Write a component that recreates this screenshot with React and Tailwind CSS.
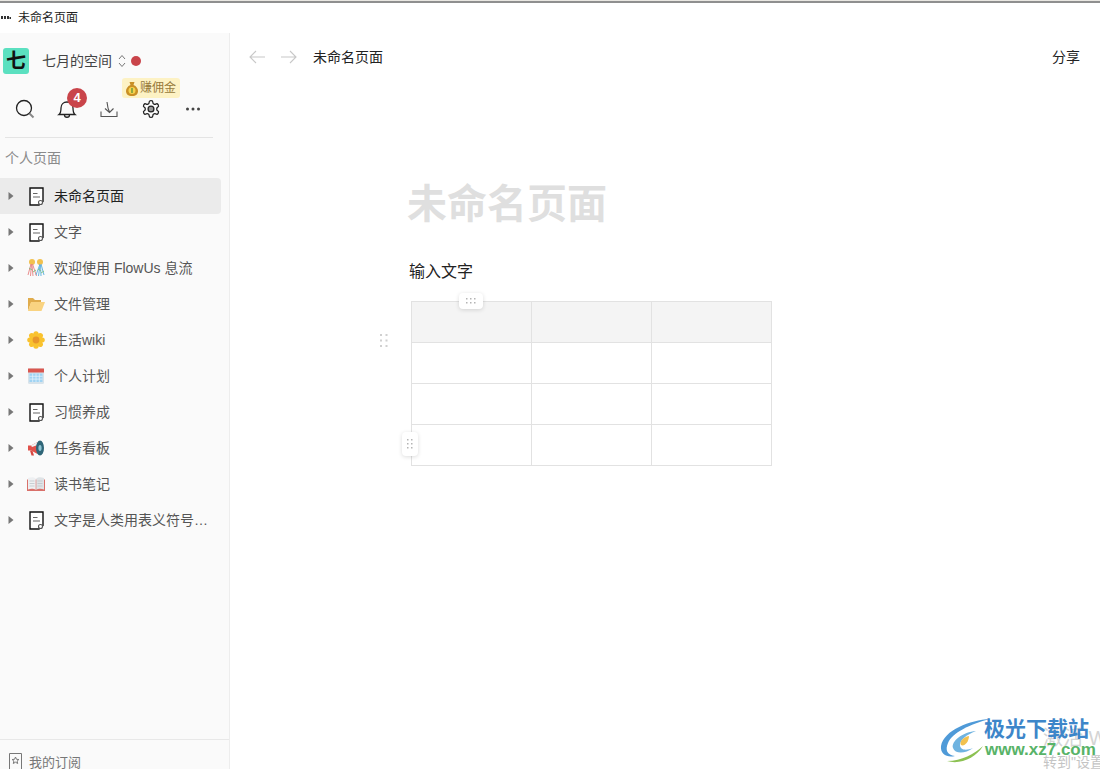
import React from 'react';

const FONT = '"Liberation Sans", "Noto Sans CJK SC", sans-serif';

const PageIcon = () => (
  <svg width="15" height="19" viewBox="0 0 15 19" fill="none">
    <path d="M1 1h13v13.500L10 18H1z" fill="#fff" stroke="#111" strokeWidth="1.400" />
    <path d="M4 6.500h4.500M4 10h7" stroke="#666" strokeWidth="1.100" />
    <circle cx="11.500" cy="15.500" r="2" fill="#fff" stroke="#555" strokeWidth="1.100" />
  </svg>
);

const Party = () => (
  <svg width="18" height="18" viewBox="0 0 18 18" fill="none">
    <circle cx="5" cy="3" r="3" fill="#f2c14e" />
    <circle cx="13" cy="3" r="3" fill="#f2c14e" />
    <path d="M4 5L1 16M4.500 5L3.500 17M5 6l1 11M5.500 5l4 12" stroke="#e58080" strokeWidth=".9" />
    <path d="M13 5l-4 11M13 6l-1.500 11M13.500 6l.5 11M14 5l3 11" stroke="#58aede" strokeWidth=".9" />
    <path d="M2 9l3 2M6 13l3-2M11 10l3 2M14 14l3-2" stroke="#7ac07a" strokeWidth=".9" />
  </svg>
);

const Folder = () => (
  <svg width="18" height="16" viewBox="0 0 18 16" fill="none">
    <path d="M1 2h5l2 2h6v3H4l-3 8z" fill="#e0ac4c" />
    <path d="M4 6h14l-3.500 9H1z" fill="#f9d381" />
  </svg>
);

const Flower = () => (
  <svg width="18" height="18" viewBox="0 0 18 18">
    {[0, 45, 90, 135, 180, 225, 270, 315].map((a) => (
      <ellipse key={a} cx="9" cy="3.800" rx="2.800" ry="3.600" fill="#f9c22e" transform={`rotate(${a} 9 9)`} />
    ))}
    <circle cx="9" cy="9" r="3.400" fill="#e8962a" />
  </svg>
);

const Calendar = () => (
  <svg width="18" height="18" viewBox="0 0 18 18">
    <rect x="1" y="1.500" width="16" height="15.500" rx="1.500" fill="#d8e3ea" />
    <rect x="1" y="1.500" width="16" height="4" fill="#d9574f" />
    <rect x="2.500" y="6.500" width="13" height="8.500" fill="#9fd3f3" />
    <path d="M2.500 9.300h13M2.500 12.100h13M5.700 6.500V15M9 6.500V15M12.300 6.500V15" stroke="#e9f5fc" strokeWidth=".7" />
  </svg>
);

const Megaphone = () => (
  <svg width="18" height="18" viewBox="0 0 18 18">
    <path d="M1 6.500h3L10.500 3v12L4 11.500H1z" fill="#e0514a" />
    <path d="M4 6.500L10.500 3v3L5 8z" fill="#f3f3f3" />
    <path d="M3 11.500l1.500 5H7l-1.500-4.500z" fill="#d9453f" />
    <ellipse cx="13" cy="9" rx="4" ry="7.500" fill="#2f6577" />
    <ellipse cx="13" cy="9" rx="1.600" ry="3" fill="#8fc5d4" />
  </svg>
);

const Book = () => (
  <svg width="18" height="14" viewBox="0 0 18 14">
    <path d="M0 2.500h18V14H0z" fill="#d9706a" />
    <path d="M1 1c3-1 6-1 7.700.6V13C7 11.600 4 11.600 1 12.400z" fill="#eef0f2" />
    <path d="M17 1c-3-1-6-1-7.700.6V13c1.700-1.400 4.700-1.400 7.700-.6z" fill="#dfe3e6" />
    <path d="M2.500 4h5M2.500 6.500h5M2.500 9h5M10.500 4h5M10.500 6.500h5M10.500 9h5" stroke="#b9c0c5" strokeWidth=".7" />
  </svg>
);

const pages = [
  { name: '未命名页面', icon: <PageIcon />, active: true },
  { name: '文字', icon: <PageIcon /> },
  { name: '欢迎使用 FlowUs 息流', icon: <Party /> },
  { name: '文件管理', icon: <Folder /> },
  { name: '生活wiki', icon: <Flower /> },
  { name: '个人计划', icon: <Calendar /> },
  { name: '习惯养成', icon: <PageIcon /> },
  { name: '任务看板', icon: <Megaphone /> },
  { name: '读书笔记', icon: <Book /> },
  { name: '文字是人类用表义符号记录', icon: <PageIcon /> },
];

const Dots = ({ cols, rows, color = '#c4c4c4', step = 4, size = 1.5 }) => {
  const w = (cols - 1) * step + size;
  const h = (rows - 1) * step + size;
  return (
    <svg width={w} height={h} viewBox={`0 0 ${w} ${h}`}>
      {Array.from({ length: cols * rows }).map((_, i) => (
        <rect key={i} x={(i % cols) * step} y={Math.floor(i / cols) * step} width={size} height={size} fill={color} />
      ))}
    </svg>
  );
};

const Sidebar = () => (
  <aside className="w-[230px] shrink-0 h-full bg-[#fafafa] border-r border-[#ededed] flex flex-col overflow-hidden">
    <div className="h-[56px] pt-[15px] pl-[3px] flex items-start">
      <div className="w-[26px] h-[26px] rounded-[3px] bg-[#5be0c0] flex items-center justify-center text-[20px] font-bold text-[#111]">七</div>
      <span className="ml-[13px] mt-[4px] text-[14px] leading-[18px] text-[#444]">七月的空间</span>
      <svg className="ml-[5px] mt-[6px]" width="10" height="14" viewBox="0 0 10 14" fill="none" stroke="#777" strokeWidth="1">
        <path d="M2 5l3-3.500L8 5M2 9l3 3.500L8 9" />
      </svg>
      <span className="ml-[4px] mt-[8px] w-[10px] h-[10px] rounded-full bg-[#c9444a]" />
    </div>
    <div className="relative h-[48px] flex items-start pl-[15px]">
      <svg className="mt-[10px]" width="20" height="20" viewBox="0 0 20 20" fill="none">
        <circle cx="9" cy="9" r="7.500" stroke="#222" strokeWidth="1.300" />
        <path d="M14.500 14.500L18.500 18.500" stroke="#888" strokeWidth="2" />
      </svg>
      <div className="relative ml-[22px] mt-[10px]">
        <svg width="20" height="20" viewBox="0 0 20 20" fill="none" stroke="#222" strokeWidth="1.300">
          <path d="M2 15.500c2-1.500 2-3.500 2-6.500 0-3.500 2.500-6 6-6s6 2.500 6 6c0 3 0 5 2 6.500z" />
          <path d="M7.500 16c0 3 5 3 5 0" />
        </svg>
        <span className="absolute -top-[11px] left-[10px] w-[20px] h-[20px] rounded-full bg-[#c9444a] text-white text-[13px] font-bold flex items-center justify-center">4</span>
      </div>
      <svg className="ml-[23px] mt-[11px]" width="18" height="18" viewBox="0 0 18 18" fill="none" stroke="#555" strokeWidth="1.100">
        <path d="M1 11.500v5h16v-5" />
        <path d="M7 2c.5 5 1.500 8 2.500 10M5 8.500l4.500 4 4-4" />
      </svg>
      <svg className="ml-[23px] mt-[10px]" width="20" height="20" viewBox="0 0 24 24" fill="none" stroke="#222" strokeWidth="1.500">
        <path d="M12.220 2h-.44a2 2 0 0 0-2 2v.18a2 2 0 0 1-1 1.730l-.43.25a2 2 0 0 1-2 0l-.15-.08a2 2 0 0 0-2.730.73l-.22.380a2 2 0 0 0 .73 2.730l.15.100a2 2 0 0 1 1 1.720v.510a2 2 0 0 1-1 1.740l-.15.090a2 2 0 0 0-.73 2.730l.22.380a2 2 0 0 0 2.730.73l.15-.08a2 2 0 0 1 2 0l.43.250a2 2 0 0 1 1 1.730V20a2 2 0 0 0 2 2h.44a2 2 0 0 0 2-2v-.18a2 2 0 0 1 1-1.730l.43-.25a2 2 0 0 1 2 0l.15.080a2 2 0 0 0 2.730-.73l.22-.390a2 2 0 0 0-.73-2.730l-.15-.080a2 2 0 0 1-1-1.740v-.500a2 2 0 0 1 1-1.740l.15-.090a2 2 0 0 0 .73-2.730l-.22-.380a2 2 0 0 0-2.730-.73l-.15.080a2 2 0 0 1-2 0l-.43-.250a2 2 0 0 1-1-1.730V4a2 2 0 0 0-2-2z" />
        <circle cx="12" cy="12" r="3.500" fill="#999" stroke="#222" />
      </svg>
      <svg className="ml-[24px] mt-[18px]" width="16" height="4" viewBox="0 0 16 4" fill="#444">
        <circle cx="2.500" cy="2" r="1.500" />
        <circle cx="8" cy="2" r="1.500" />
        <circle cx="13.500" cy="2" r="1.500" />
      </svg>
      <div className="absolute left-[122px] -top-[11px] h-[20px] w-[58px] rounded-[3px] bg-[#fdf2c4] flex items-center pl-[4px]">
        <svg width="12" height="15" viewBox="0 0 12 15">
          <path d="M3.500 1h5L7.500 4c3 1 4.500 4 4.500 6 0 3-2 5-6 5s-6-2-6-5c0-2 1.500-5 4.500-6z" fill="#c98f24" />
          <circle cx="6" cy="9.500" r="3.500" fill="#f6d24c" />
          <path d="M6 7v5" stroke="#4d8b3a" strokeWidth="1.200" />
        </svg>
        <span className="ml-[2px] text-[12px] leading-none text-[#96793a] whitespace-nowrap">赚佣金</span>
      </div>
    </div>
    <div className="ml-[5px] w-[208px] border-t border-[#e4e4e4]" />
    <div className="pl-[5px] pt-[12px] h-[40px] text-[14px] leading-[17px] text-[#8a8a8a]">个人页面</div>
    <nav className="flex-1 pr-[8px]">
      {pages.map((p) => (
        <div
          key={p.name}
          className={`h-[36px] flex items-center rounded-r-[4px] pl-[8px] ${p.active ? 'bg-[#ebebeb]' : ''}`}
        >
          <svg width="6" height="8" viewBox="0 0 6 8" fill="#777" className="shrink-0">
            <path d="M0.500 0L5.500 4L0.500 8z" />
          </svg>
          <span className="w-[18px] ml-[13px] shrink-0 flex items-center justify-center">{p.icon}</span>
          <span className={`ml-[9px] w-[154px] truncate text-[14px] ${p.active ? 'text-[#222]' : 'text-[#555]'}`}>{p.name}</span>
        </div>
      ))}
    </nav>
    <div className="h-[30px] border-t border-[#e8e8e8] pl-[9px] pt-[13px] flex items-start">
      <svg width="13" height="17" viewBox="0 0 13 17" fill="none" stroke="#777" strokeWidth="1">
        <path d="M.5.500h12v16H.5z" />
        <path d="M6.500 4l1 2.300 2.400.2-1.800 1.600.6 2.400-2.200-1.300-2.200 1.300.6-2.400-1.800-1.600 2.400-.2z" />
      </svg>
      <span className="ml-[7px] mt-[2px] text-[13px] leading-[16px] text-[#777] whitespace-nowrap">我的订阅</span>
    </div>
  </aside>
);

const Watermark = () => (
  <div className="absolute right-0 bottom-0 w-[160px] h-[55px] overflow-hidden pointer-events-none">
    <span className="absolute left-[103px] top-[14px] text-[20px] leading-none text-[#d4d4d4] whitespace-nowrap">激活 W</span>
    <span className="absolute left-[103px] top-[41px] text-[14px] leading-none text-[#c4c4c4] whitespace-nowrap">转到"设置"</span>
    <svg className="absolute left-0 top-[3px]" width="64" height="50" viewBox="0 0 64 50" fill="none">
      <path d="M50 2C30 3 4 13 1 29c-1 8 6 12 14 10-8-1-10-6-7-13C12 16 30 7 50 2z" fill="#4f9ad8" />
      <path d="M36 14C23 15 11 24 13 31c2 6 12 6 20 0-7 3-13 2-13-3 0-5 6-10 16-14z" fill="#6fb3e0" />
      <path d="M7 44c13 4 29-3 36-15-9 8-21 15-36 15z" fill="#8cc152" />
      <path d="M29 19c-6 1-10 6-8 9 3 2 8-3 8-9z" fill="#f2c14e" />
    </svg>
    <span className="absolute left-[44px] top-[3px] text-[21px] leading-[24px] font-bold text-[#3d86c9] whitespace-nowrap">极光下载站</span>
    <span className="absolute left-[45px] top-[26px] text-[17px] leading-[20px] font-bold text-[#58b368] whitespace-nowrap">www.xz7.com</span>
  </div>
);

export default function App() {
  return (
    <div className="relative w-[1100px] h-[769px] bg-white overflow-hidden flex flex-col" style={{ fontFamily: FONT }}>
      <div className="h-[3px] shrink-0 bg-[#e9e7e2] border-b-2 border-[#8f8f8f]" />
      <div className="h-[30px] shrink-0 flex items-center">
        <svg className="ml-[1px]" width="10" height="6" viewBox="0 0 10 6" fill="#333">
          <path d="M0 1h2v3H0zM3 1h2v3H3zM6 1h2v3H6zM8.500 2H10v2H8.500z" />
        </svg>
        <span className="ml-[7px] text-[12px] text-[#222]">未命名页面</span>
      </div>
      <div className="flex-1 flex min-h-0">
        <Sidebar />
        <main className="flex-1 min-w-0 flex flex-col">
          <div className="h-[48px] shrink-0 flex items-center pl-[19px] pr-[20px]">
            <svg width="17" height="14" viewBox="0 0 17 14" fill="none" stroke="#c8c8c8" strokeWidth="1.100">
              <path d="M16 7H1M7 1L1 7l6 6" />
            </svg>
            <svg className="ml-[14px]" width="17" height="14" viewBox="0 0 17 14" fill="none" stroke="#c8c8c8" strokeWidth="1.100">
              <path d="M1 7h15M10 1l6 6-6 6" />
            </svg>
            <span className="ml-[16px] text-[14px] text-[#222]">未命名页面</span>
            <span className="ml-auto text-[14px] text-[#222]">分享</span>
          </div>
          <div className="pl-[177px] pt-[93px]">
            <h1 className="h-[60px] text-[40px] leading-[60px] font-bold text-[#dfdfdf]">未命名页面</h1>
            <p className="mt-[26px] ml-[2px] text-[16px] leading-[24px] text-[#222]">输入文字</p>
            <div className="relative mt-[17px] ml-[4px] w-[361px]">
              <div className="grid grid-cols-3 border-t border-l border-[#e2e2e2]">
                {Array.from({ length: 12 }).map((_, i) => (
                  <div key={i} className={`h-[41px] border-r border-b border-[#e2e2e2] ${i < 3 ? 'bg-[#f4f4f4]' : ''}`} />
                ))}
              </div>
              <div className="absolute left-[48px] -top-[8px] w-[24px] h-[16px] rounded-[4px] bg-white shadow-[0_1px_4px_rgba(0,0,0,0.14)] flex items-center justify-center">
                <Dots cols={3} rows={2} color="#b4b4b4" />
              </div>
              <div className="absolute -left-[9px] top-[131px] w-[16px] h-[24px] rounded-[4px] bg-white shadow-[0_1px_4px_rgba(0,0,0,0.14)] flex items-center justify-center">
                <Dots cols={2} rows={3} color="#b4b4b4" />
              </div>
              <div className="absolute -left-[31px] top-[33px]">
                <Dots cols={2} rows={3} color="#d0d0d0" step={5.5} size={2} />
              </div>
            </div>
          </div>
        </main>
      </div>
      <Watermark />
    </div>
  );
}
